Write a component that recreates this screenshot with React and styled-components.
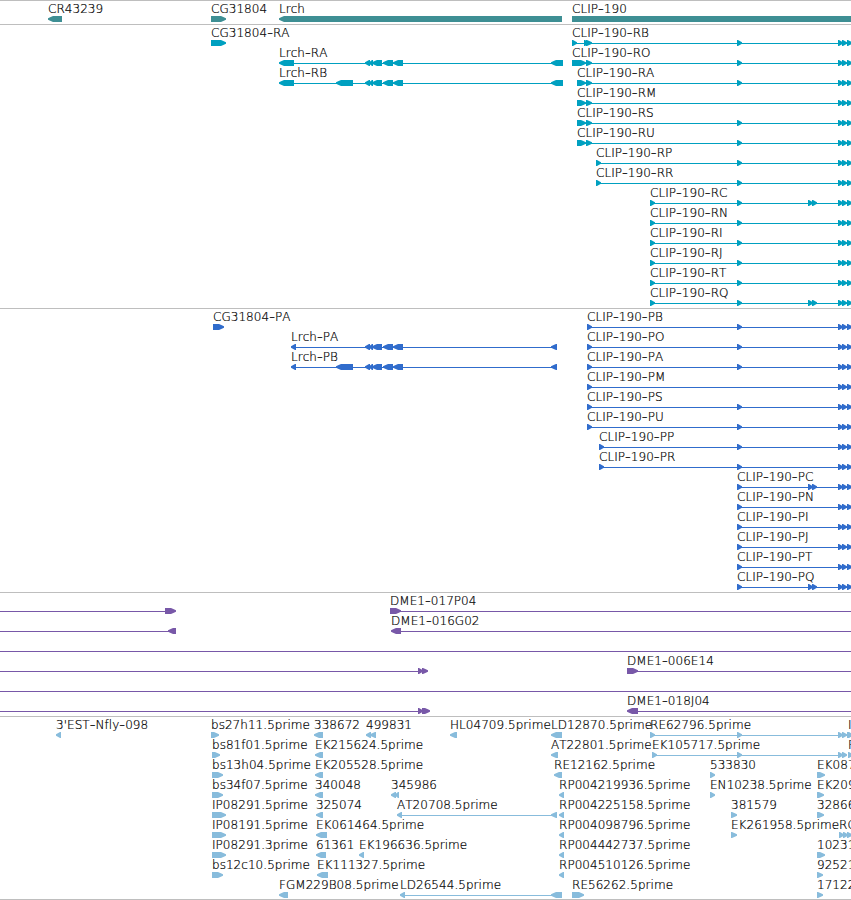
import React from "react"
import styled, { createGlobalStyle } from "styled-components"

const GlobalStyle = createGlobalStyle`
  body {
    margin: 0;
    background: #fff;
    overflow: hidden;
  }
`

const Browser = styled.main`
  width: 100%;
  height: 900px;
  box-sizing: border-box;
  overflow: hidden;
  font-family: "DejaVu Sans", sans-serif;
  font-weight: 200;
  font-size: 12px;
  font-kerning: none;
  color: #000;
`

const Track = styled.section`
  box-sizing: border-box;
  border-top: 1px solid #bebebe;
  padding-bottom: ${props => props.gap}px;
  color: ${props => props.tint};

  &:last-child {
    border-bottom: 1px solid #bebebe;
  }
`

const Row = styled.div`
  display: grid;
  grid-template-columns: 100%;
  height: 20px;
`

const Feature = styled.div`
  grid-area: 1 / 1;
  display: flex;
  flex-direction: column;
  min-width: 0;
  padding-left: ${props => props.start}px;
`

const Label = styled.span`
  box-sizing: border-box;
  height: 15px;
  padding-top: 1px;
  line-height: 15px;
  white-space: pre;
  color: #000;
  letter-spacing: 0.04px;
  -webkit-text-stroke: 0.22px #000;
`

const Hyphen = styled.span`
  font-size: 16px;
  line-height: 0;
  vertical-align: -1px;
`

const Glyph = styled.svg`
  display: block;
  flex: none;
  height: 6px;
  overflow: visible;
  fill: currentColor;
`

const EDGE = 852
const HEAD = 6

// [start, end] pairs in pixels along the sequence
const TAIL = [[838, 843], [842, 847], [847, 852]]
const MID = [737, 742]
const PAIR = [[808, 813], [812, 817]]
const LRCH = [[365, 370], [369, 373], [372, 382], [383, 393], [393, 403]]

const fwd = (label, exons, line) => ({ label, exons, line, dir: 1 })
const rev = (label, exons, line) => ({ label, exons, line, dir: -1 })
const span = () => ({ label: "", exons: [], line: [0, EDGE], dir: 1 })
const clip = (id, ...exons) => fwd(`CLIP-190-${id}`, [...exons, ...TAIL])

const five = [577, 586]
const six = [586, 592]

const tracks = [
  {
    name: "genes",
    tint: "#3e8f94",
    rows: [
      [
        rev("CR43239", [[48, 62]]),
        fwd("CG31804", [[211, 226]]),
        rev("Lrch", [[279, 562]]),
        fwd("CLIP-190", [[572, 870]]),
      ],
    ],
  },
  {
    name: "transcripts",
    tint: "#00a0c0",
    rows: [
      [fwd("CG31804-RA", [[211, 226]]), clip("RB", [572, 577], [584, 589], six, MID)],
      [rev("Lrch-RA", [[279, 294], ...LRCH, [551, 563]]), clip("RO", [572, 586], six, MID)],
      [
        rev("Lrch-RB", [[279, 294], [336, 353], ...LRCH, [551, 563]]),
        clip("RA", five, six, MID),
      ],
      [clip("RM", five, six)],
      [clip("RS", five, six, MID)],
      [clip("RU", five, six, MID)],
      [clip("RP", [596, 601], MID)],
      [clip("RR", [596, 601], MID)],
      [clip("RC", [650, 655], MID, ...PAIR)],
      [clip("RN", [650, 655], MID)],
      [clip("RI", [650, 655], MID)],
      [clip("RJ", [650, 655], MID)],
      [clip("RT", [650, 655], MID)],
      [clip("RQ", [650, 655], MID, ...PAIR)],
    ],
  },
  {
    name: "proteins",
    tint: "#306ccc",
    rows: [
      [fwd("CG31804-PA", [[213, 224]]), clip("PB", [587, 592], MID)],
      [rev("Lrch-PA", [[291, 296], ...LRCH, [551, 557]]), clip("PO", [587, 592], MID)],
      [
        rev("Lrch-PB", [[291, 296], [336, 353], ...LRCH, [551, 557]]),
        clip("PA", [587, 592], MID),
      ],
      [clip("PM", [587, 592])],
      [clip("PS", [587, 592], MID)],
      [clip("PU", [587, 592], MID)],
      [clip("PP", [599, 604], MID)],
      [clip("PR", [599, 604], MID)],
      [clip("PC", MID, ...PAIR)],
      [clip("PN", MID)],
      [clip("PI", MID)],
      [clip("PJ", MID)],
      [clip("PT", MID)],
      [clip("PQ", MID, ...PAIR)],
    ],
  },
  {
    name: "clones",
    tint: "#7858a8",
    rows: [
      [fwd("", [[165, 176]], [0, 170]), fwd("DME1-017P04", [[390, 401]], [395, EDGE])],
      [rev("", [[168, 176]], [0, 170]), rev("DME1-016G02", [[391, 401]], [395, EDGE])],
      [span()],
      [
        fwd("", [[418, 423], [422, 428]], [0, 422]),
        fwd("DME1-006E14", [[627, 638]], [630, EDGE]),
      ],
      [span()],
      [
        fwd("", [[418, 423], [422, 430]], [0, 422]),
        rev("DME1-018J04", [[627, 638]], [630, EDGE]),
      ],
    ],
  },
  {
    name: "ests",
    tint: "#88bcdc",
    gap: 2,
    rows: [
      [
        rev("3'EST-Nfly-098", [[56, 61]]),
        fwd("bs27h11.5prime", [[211, 219]]),
        rev("338672", [[314, 323]]),
        rev("499831", [[366, 371], [370, 376]]),
        rev("HL04709.5prime", [[450, 457]]),
        rev("LD12870.5prime", [[551, 562]]),
        fwd("RE62796.5prime", [[650, 655], MID, ...TAIL]),
        fwd("I", [[848, 853]]),
      ],
      [
        fwd("bs81f01.5prime", [[212, 220]]),
        rev("EK215624.5prime", [[315, 323]]),
        rev("AT22801.5prime", [[551, 558]]),
        fwd("EK105717.5prime", [[652, 657], MID, [838, 843], [842, 847]]),
        fwd("R", [[848, 853]]),
      ],
      [
        fwd("bs13h04.5prime", [[212, 223]]),
        rev("EK205528.5prime", [[315, 323]]),
        rev("RE12162.5prime", [[554, 562]]),
        fwd("533830", [[710, 715]]),
        fwd("EK087", [[817, 825]]),
      ],
      [
        fwd("bs34f07.5prime", [[212, 223]]),
        rev("340048", [[315, 323]]),
        rev("345986", [[391, 396], [395, 399]]),
        rev("RP004219936.5prime", [[559, 564]]),
        fwd("EN10238.5prime", [[710, 715]]),
        fwd("EK209", [[817, 824]]),
      ],
      [
        fwd("IP08291.5prime", [[212, 226]]),
        rev("325074", [[316, 323]]),
        rev("AT20708.5prime", [[397, 402], [551, 557]]),
        rev("RP004225158.5prime", [[559, 564]]),
        fwd("381579", [[731, 737]]),
        fwd("32866", [[817, 824]]),
      ],
      [
        fwd("IP08191.5prime", [[212, 226]]),
        rev("EK061464.5prime", [[316, 327]]),
        rev("RP004098796.5prime", [[559, 564]]),
        fwd("EK261958.5prime", [[731, 737]]),
        fwd("RC", [[839, 844], [843, 848], [847, 852]]),
      ],
      [
        fwd("IP08291.3prime", [[212, 226]]),
        rev("61361", [[316, 326]]),
        rev("EK196636.5prime", [[359, 364]]),
        rev("RP004442737.5prime", [[559, 564]]),
        fwd("10231", [[817, 825]]),
      ],
      [
        fwd("bs12c10.5prime", [[212, 223]]),
        rev("EK111327.5prime", [[317, 328]]),
        rev("RP004510126.5prime", [[559, 564]]),
        fwd("92521", [[817, 823]]),
      ],
      [
        rev("FGM229B08.5prime", [[279, 288]]),
        rev("LD26544.5prime", [[400, 405], [551, 562]]),
        fwd("RE56262.5prime", [[572, 584]]),
        fwd("17122", [[817, 823]]),
      ],
    ],
  },
]

// an exon is a block that tapers to a blunt point in the reading direction
const exonPoints = (from, to, dir) => {
  const head = Math.min(HEAD, to - from)
  const tip = dir > 0 ? to : from
  const back = dir > 0 ? from : to
  const neck = tip - dir * head
  const bend = tip - dir * head * 0.45
  return [
    [back, 0],
    [neck, 0],
    [neck + dir, 0],
    [bend, 0.9],
    [tip, 2.2],
    [tip, 3.8],
    [bend, 5.1],
    [neck + dir, 6],
    [back, 6],
  ].join(" ")
}

const GeneFeature = ({ label, exons, line, dir }) => {
  const start = exons.length ? exons[0][0] : 0
  const [from, to] = line || [start + 2, exons[exons.length - 1][1] - 2]
  return (
    <Feature start={label ? start : 0}>
      <Label>
        {label.split("-").map((part, i) => (
          <React.Fragment key={i}>
            {i > 0 && <Hyphen>-</Hyphen>}
            {part}
          </React.Fragment>
        ))}
      </Label>
      <Glyph width="1">
        <g transform={`translate(${label ? -start : 0} 0)`}>
          {to > from && <rect x={from} y="3" width={to - from} height="1" />}
          {exons.map(([a, b]) => (
            <polygon key={a} points={exonPoints(a, b, dir)} />
          ))}
        </g>
      </Glyph>
    </Feature>
  )
}

const App = () => (
  <>
    <GlobalStyle />
    <Browser>
      {tracks.map(({ name, tint, gap = 3, rows }) => (
        <Track key={name} tint={tint} gap={gap}>
          {rows.map((features, i) => (
            <Row key={i}>
              {features.map((feature, j) => (
                <GeneFeature key={j} {...feature} />
              ))}
            </Row>
          ))}
        </Track>
      ))}
    </Browser>
  </>
)

export default App
